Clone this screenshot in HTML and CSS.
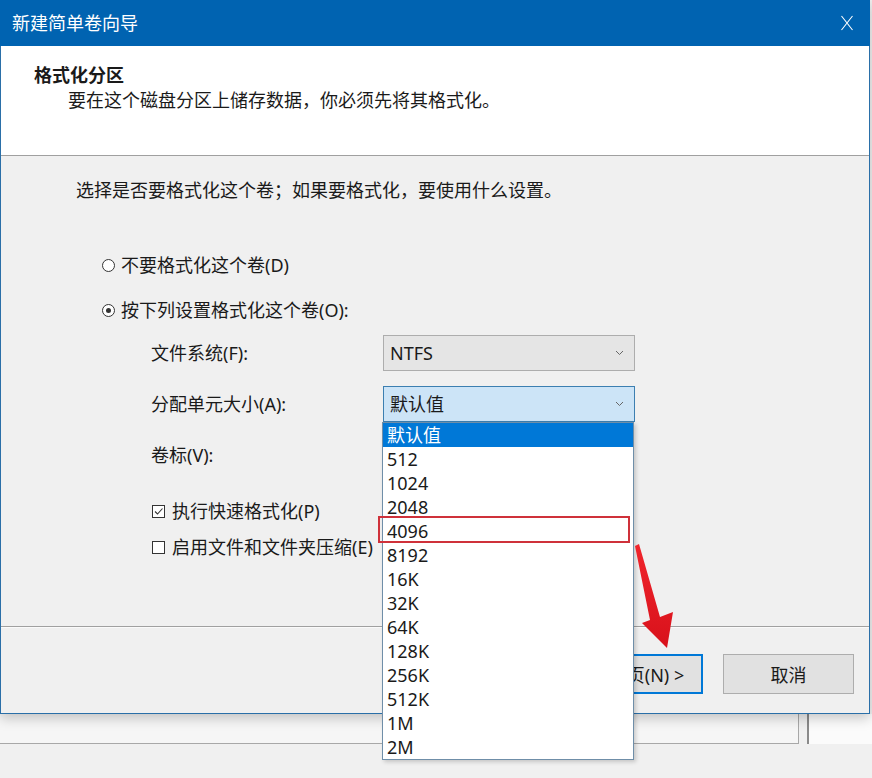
FILE: index.html
```html
<!DOCTYPE html>
<html lang="zh-CN">
<head>
    <meta charset="UTF-8">
    <title>新建简单卷向导</title>
    <link rel="stylesheet" href="styles.css">
</head>
<body>

    <div class="wizard">
        <div class="titlebar">
            <span class="title">新建简单卷向导</span>
            <svg class="close" width="14" height="16" viewBox="0 0 14 16">
                <path d="M1.5 1 L12.5 15 M12.5 1 L1.5 15" stroke="#fff" stroke-width="1.1" fill="none"/>
            </svg>
        </div>

        <div class="header">
            <div class="header-title">格式化分区</div>
            <div class="header-sub">要在这个磁盘分区上储存数据，你必须先将其格式化。</div>
        </div>

        <div class="content">
            <p class="intro">选择是否要格式化这个卷；如果要格式化，要使用什么设置。</p>

            <div class="radio first"><span class="mark"></span>不要格式化这个卷(D)</div>
            <div class="radio checked"><span class="mark"></span>按下列设置格式化这个卷(O):</div>

            <div class="settings">
                <span class="label">文件系统(F):</span>
                <div class="combo">NTFS
                    <svg class="chevron" width="9" height="6" viewBox="0 0 9 6"><path d="M1 1 L4.5 4.5 L8 1" stroke="#666" fill="none"/></svg>
                </div>
                <span class="label">分配单元大小(A):</span>
                <div class="combo focused">默认值
                    <svg class="chevron" width="9" height="6" viewBox="0 0 9 6"><path d="M1 1 L4.5 4.5 L8 1" stroke="#666" fill="none"/></svg>
                </div>
                <span class="label">卷标(V):</span>
                <div class="textbox"></div>
            </div>

            <div class="check checked first">
                <span class="box"><svg width="11" height="11" viewBox="0 0 11 11"><path d="M2 5.5 L4.5 8 L9.5 2.5" stroke="#333" stroke-width="1.1" fill="none"/></svg></span>执行快速格式化(P)
            </div>
            <div class="check"><span class="box"></span>启用文件和文件夹压缩(E)</div>
        </div>

        <div class="footer">
            <button class="btn">&lt; 上一步(B)</button>
            <button class="btn default">下一页(N) &gt;</button>
            <button class="btn cancel">取消</button>
        </div>
    </div>

    <!-- window behind the wizard -->
    <div class="behind">
        <div class="behind-row">
            <div class="behind-field"></div>
            <div class="behind-side"></div>
        </div>
    </div>

    <!-- open combo list -->
    <ul class="dropdown">
        <li class="selected">默认值</li>
        <li>512</li>
        <li>1024</li>
        <li>2048</li>
        <li>4096</li>
        <li>8192</li>
        <li>16K</li>
        <li>32K</li>
        <li>64K</li>
        <li>128K</li>
        <li>256K</li>
        <li>512K</li>
        <li>1M</li>
        <li>2M</li>
    </ul>

    <!-- annotations -->
    <div class="mark-box"></div>
    <svg class="arrow" width="50" height="115" viewBox="0 0 50 115">
        <defs>
            <linearGradient id="red" x1="0" y1="0" x2="0" y2="1">
                <stop offset="0" stop-color="#f0252c"/>
                <stop offset="1" stop-color="#d8111b"/>
            </linearGradient>
        </defs>
        <polygon points="5,6 9,4 30,77 43,72 37,108 12,83 20,80" fill="url(#red)"/>
    </svg>

</body>
</html>
```

FILE: styles.css
```css
body {
    margin: 0;
    width: 872px;
    height: 778px;
    overflow: hidden;
    position: relative;
    background-color: #f0f0f0;
    font-family: "Noto Sans", "Noto Sans CJK SC", sans-serif;
    font-size: 18px;
    color: #1a1a1a;
}
.wizard {
    width: 870px;
    height: 714px;
    box-sizing: border-box;
    border: 1px solid #2a6fa8;
    border-top: none;
    background-color: #f0f0f0;
    display: flex;
    flex-direction: column;
    position: relative;
    z-index: 1;
    box-shadow: 0 4px 12px rgba(0, 0, 0, 0.22);
}
.titlebar {
    height: 46px;
    flex: none;
    background-color: #0063b1;
    color: white;
    display: flex;
    align-items: center;
    justify-content: space-between;
    padding: 0 16px 0 12px;
    margin: 0 -1px;
}
.title {
    line-height: 24px;
}
.header {
    height: 110px;
    flex: none;
    box-sizing: border-box;
    background-color: white;
    border-bottom: 1px solid #a0a0a0;
    padding: 17px 0 0 33px;
    line-height: 24px;
}
.header-title {
    font-weight: bold;
}
.header-sub {
    margin: 1px 0 0 34px;
}
.content {
    height: 470px;
    flex: none;
    box-sizing: border-box;
    padding: 22px 0 0 75px;
    line-height: 24px;
}
.intro {
    margin: 0;
}
.radio {
    display: flex;
    align-items: center;
    margin: 21px 0 0 26px;
}
.radio.first {
    margin-top: 51px;
}
.radio .mark {
    width: 13px;
    height: 13px;
    box-sizing: border-box;
    border: 1px solid #333;
    border-radius: 50%;
    background-color: white;
    margin-right: 6px;
    display: flex;
    align-items: center;
    justify-content: center;
}
.radio.checked .mark::after {
    content: "";
    width: 5px;
    height: 5px;
    border-radius: 50%;
    background-color: #333;
}
.settings {
    display: grid;
    grid-template-columns: 232px 252px;
    grid-auto-rows: 36px;
    row-gap: 15px;
    margin: 13px 0 0 75px;
    align-items: center;
}
.combo, .textbox {
    height: 36px;
    box-sizing: border-box;
    border: 1px solid #adadad;
    background-color: #e5e5e5;
    display: flex;
    align-items: center;
    justify-content: space-between;
    padding: 0 10px 0 6px;
}
.combo.focused {
    background-color: #cce4f7;
    border-color: #3c7fb1;
}
.textbox {
    width: 248px;
    background-color: white;
    border-color: #7a7a7a;
}
.check {
    display: flex;
    align-items: center;
    margin: 12px 0 0 76px;
}
.check.first {
    margin-top: 26px;
}
.check .box {
    width: 13px;
    height: 13px;
    box-sizing: border-box;
    border: 1px solid #333;
    background-color: white;
    margin-right: 7px;
    display: flex;
    align-items: center;
    justify-content: center;
}
.footer {
    flex: 1;
    border-top: 1px solid #a0a0a0;
    box-shadow: inset 0 1px 0 #fafafa;
    display: flex;
    justify-content: flex-end;
    align-items: flex-start;
    padding: 27px 15px 0 0;
}
.btn {
    width: 131px;
    height: 40px;
    font-family: inherit;
    font-size: 18px;
    color: #1a1a1a;
    background-color: #e1e1e1;
    border: 1px solid #adadad;
    padding: 0;
}
.btn.default {
    border: 1px solid #0078d7;
    box-shadow: inset 0 0 0 1px #0078d7;
}
.btn.cancel {
    margin-left: 20px;
}
.behind {
    height: 64px;
}
.behind-row {
    display: flex;
    height: 30px;
}
.behind-field {
    width: 798px;
    border-right: 1px solid #a8a8a8;
    border-bottom: 1px solid #a8a8a8;
    background-color: #f6f6f6;
}
.behind-side {
    flex: 1;
    margin-left: 8px;
    border-left: 2px solid #8a8a8a;
    background-color: #fbfbfb;
}
.dropdown {
    position: absolute;
    left: 382px;
    top: 422px;
    width: 252px;
    height: 338px;
    box-sizing: border-box;
    margin: 0;
    padding: 0;
    list-style: none;
    background-color: white;
    border: 1px solid #6f8ea8;
    box-shadow: 2px 2px 4px rgba(0, 0, 0, 0.18);
    z-index: 2;
}
.dropdown li {
    height: 24px;
    line-height: 24px;
    padding-left: 4px;
}
.dropdown li.selected {
    background-color: #0078d7;
    color: white;
}
.mark-box {
    position: absolute;
    left: 378px;
    top: 516px;
    width: 252px;
    height: 27px;
    box-sizing: border-box;
    border: 2px solid #cf313a;
    z-index: 3;
}
.arrow {
    position: absolute;
    left: 630px;
    top: 540px;
    z-index: 3;
}
```
